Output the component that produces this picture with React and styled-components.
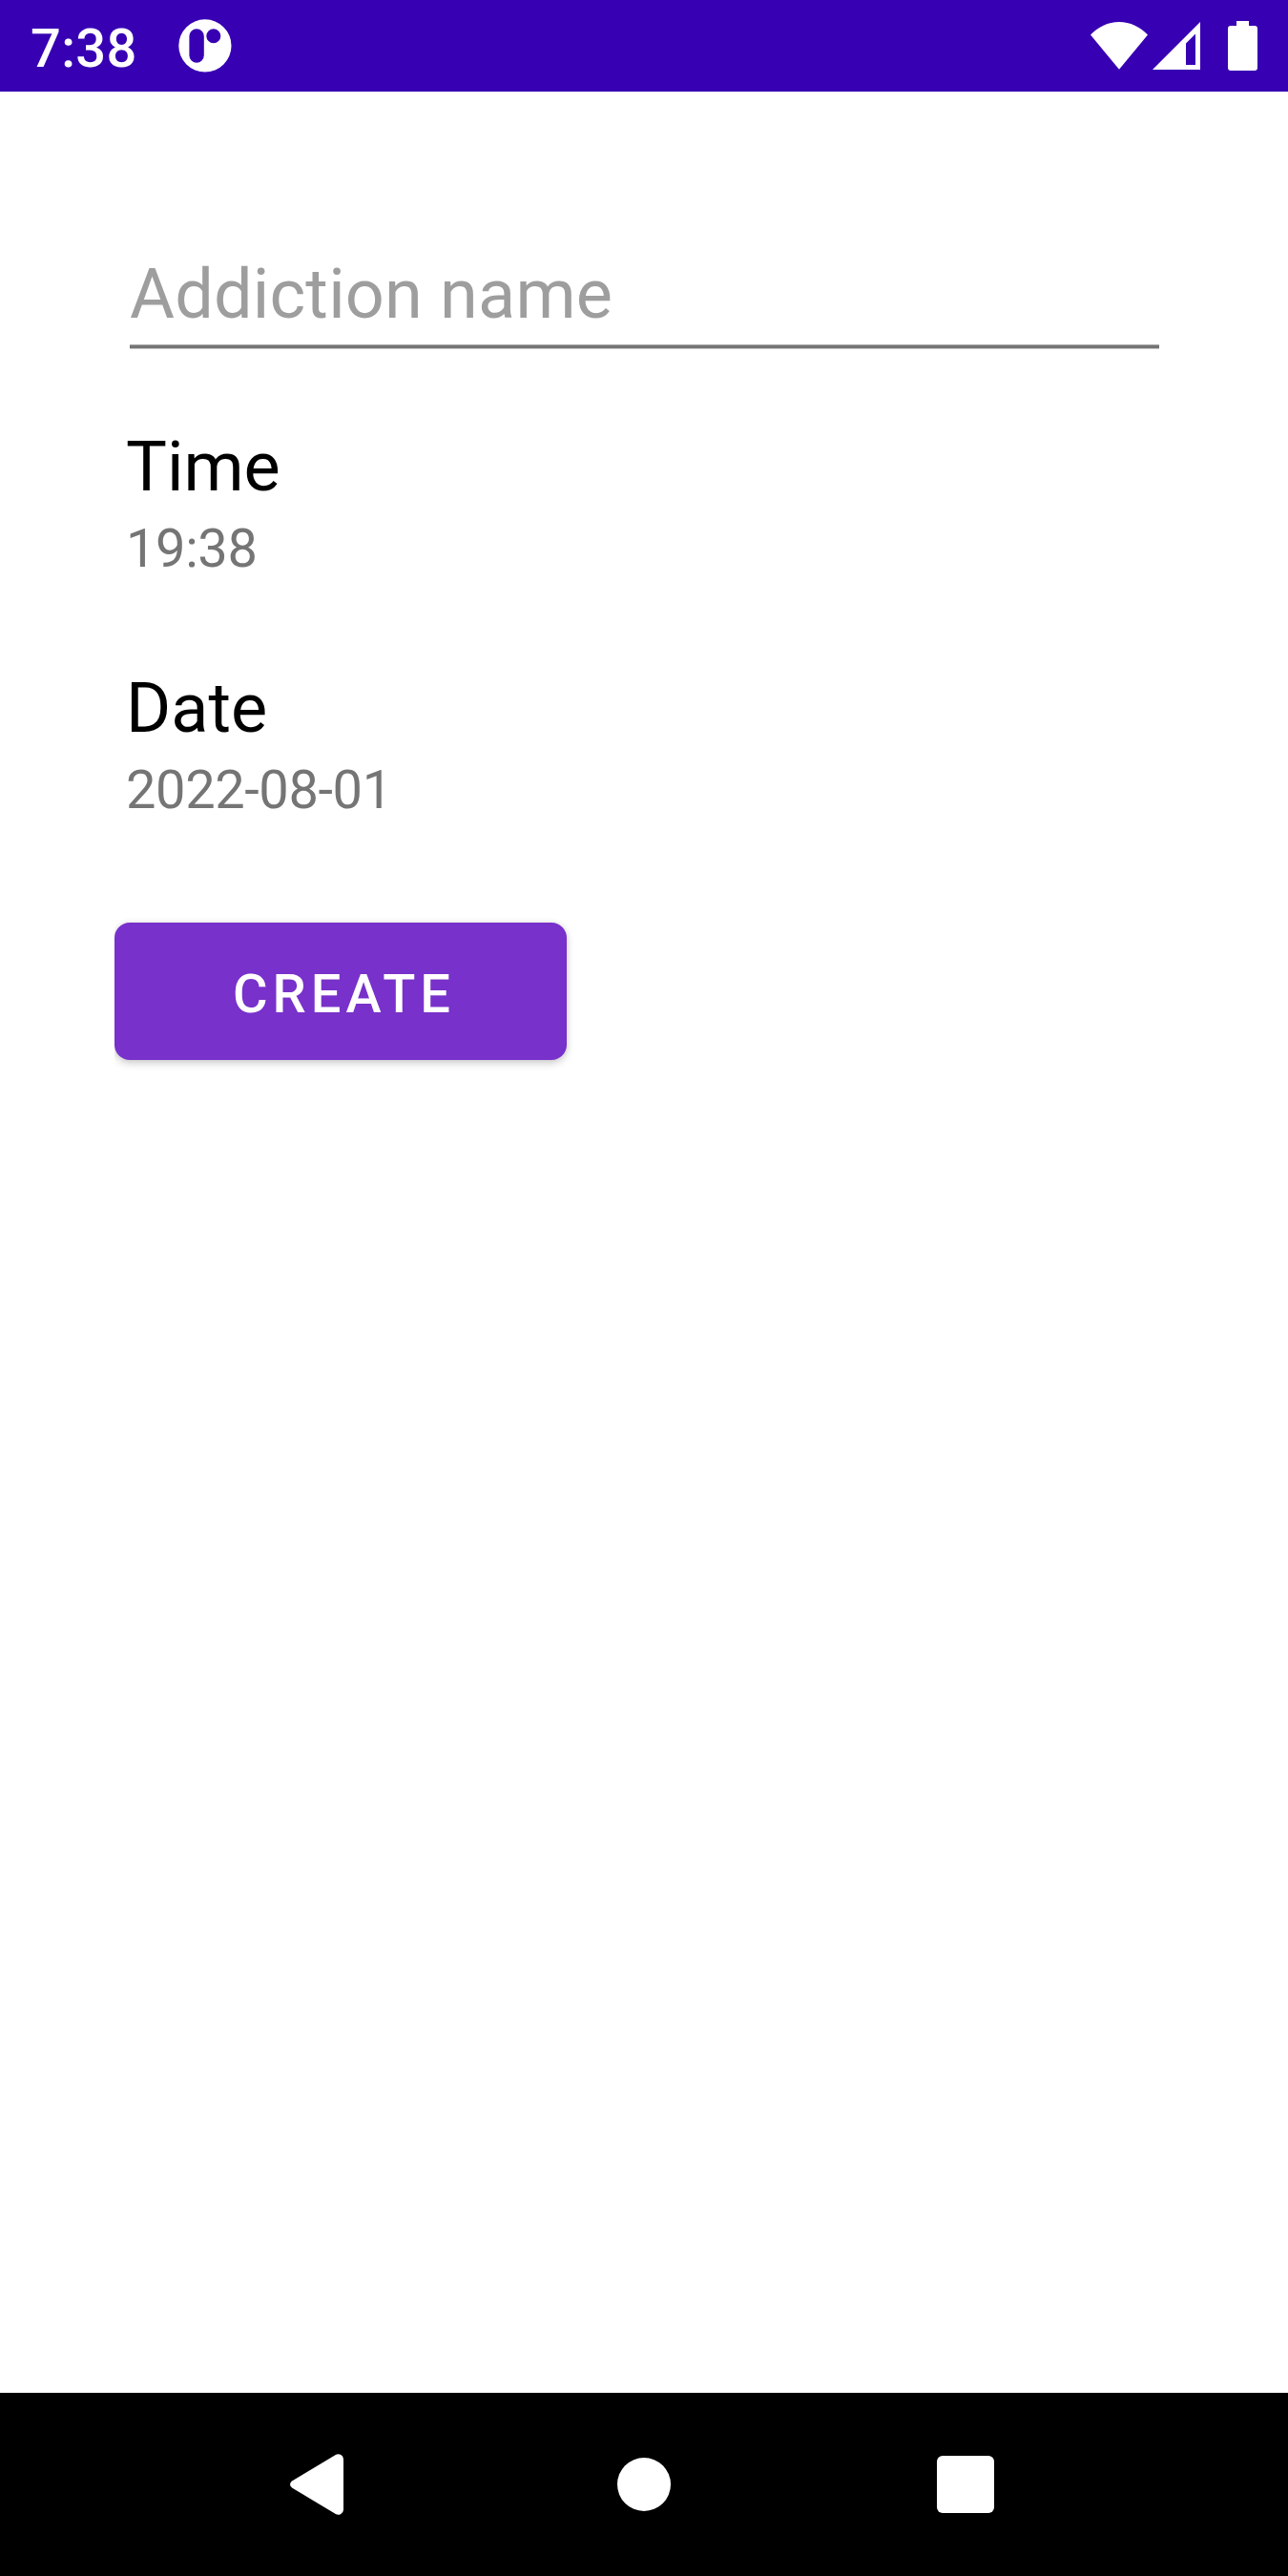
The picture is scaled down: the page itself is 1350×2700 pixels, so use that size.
import React from "react";
import styled, { createGlobalStyle } from "styled-components";

const GlobalStyle = createGlobalStyle`
  html, body { margin: 0; padding: 0; background: #fff; }
  *, *::before, *::after { box-sizing: border-box; }
`;

const Screen = styled.div`
  display: flex;
  flex-direction: column;
  width: 1350px;
  height: 2700px;
  overflow: hidden;
  background: #ffffff;
  font-family: Roboto, "Liberation Sans", sans-serif;
`;

const StatusBar = styled.header`
  display: flex;
  align-items: center;
  flex: none;
  height: 96px;
  padding-left: 32px;
  background: #3700b3;
  color: #ffffff;
`;

const Clock = styled.time`
  width: 155px;
  padding-top: 6px;
  font-size: 56px;
  font-weight: 500;
  line-height: 66px;
  letter-spacing: 0.35px;
`;

const StatusIcon = styled.svg`
  display: block;
  flex: none;
  width: ${(p) => p.$width}px;
  height: 96px;
  margin-left: ${(p) => p.$gap || 0}px;
  fill: currentColor;
`;

const StatusSpacer = styled.div`
  flex: 1;
`;

const SystemIcons = styled.div`
  display: flex;
  margin-right: 32px;
`;

const Form = styled.main`
  display: flex;
  flex-direction: column;
  flex: 1;
  margin-left: 120px;
  padding-top: 169px;
  overflow: hidden;
`;

const NameInput = styled.input`
  display: block;
  width: 1079px;
  height: 97px;
  margin: 0 0 0 16px;
  padding: 0 0 10px;
  border: 0;
  outline: 0;
  background: transparent;
  color: #000000;
  font: 400 72px/85px Roboto, "Liberation Sans", sans-serif;
  letter-spacing: 0.2px;

  &::placeholder {
    color: #9e9e9e;
    opacity: 1;
  }
`;

const Underline = styled.div`
  width: 1079px;
  height: 5px;
  margin: -1px 0 0 16px;
  border-top: 1px solid #a6a6a6;
  border-bottom: 1px solid #c8c8c8;
  background: #757575;
`;

const Field = styled.section`
  display: flex;
  flex-direction: column;
  gap: 10px;
  margin: ${(p) => p.$top}px 0 0 12px;
`;

const FieldLabel = styled.span`
  color: #000000;
  font-size: 72px;
  line-height: 85px;
`;

const FieldValue = styled.span`
  color: #757575;
  font-size: 56px;
  line-height: 66px;
  letter-spacing: -0.4px;
`;

const CreateButton = styled.button`
  flex: none;
  width: 474px;
  height: 144px;
  margin: 106px 0 0;
  padding: 6px 0 0 7px;
  border: 0;
  border-radius: 16px;
  background: #7831ca;
  box-shadow: 0 4px 8px rgba(0, 0, 0, 0.16), 0 0 6px rgba(0, 0, 0, 0.1);
  color: #ffffff;
  font: 500 56px/66px Roboto, "Liberation Sans", sans-serif;
  letter-spacing: 5px;
  text-align: center;
`;

const NavBar = styled.nav`
  display: flex;
  align-items: center;
  flex: none;
  height: 192px;
  padding-left: 304px;
  background: #000000;
`;

const BackIcon = styled.svg`
  display: block;
  width: 56px;
  height: 64px;
  fill: #ffffff;
`;

const HomeShape = styled.div`
  width: 56px;
  height: 56px;
  margin-left: 287px;
  border-radius: 50%;
  background: #ffffff;
`;

const RecentsShape = styled.div`
  width: 60px;
  height: 60px;
  margin-left: 279px;
  border-radius: 6px;
  background: #ffffff;
`;

const fields = [
  { label: "Time", value: "19:38", top: 81 },
  { label: "Date", value: "2022-08-01", top: 92 },
];

export default function App() {
  return (
    <Screen>
      <GlobalStyle />
      <StatusBar>
        <Clock>7:38</Clock>
        <StatusIcon $width={56} viewBox="187 0 56 96">
          <path
            fillRule="evenodd"
            d="M214.9 20.3a27.6 27.6 0 1 1 0 55.2a27.6 27.6 0 1 1 0-55.2z
               M206.1 30.2a7.7 7.7 0 0 0-7.7 7.7v20.2a7.7 7.7 0 0 0 15.4 0V37.9a7.7 7.7 0 0 0-7.7-7.7z
               M223.8 30.2a7.5 7.5 0 1 0 0 15a7.5 7.5 0 1 0 0-15z"
          />
        </StatusIcon>
        <StatusSpacer />
        <SystemIcons>
          <StatusIcon $width={60} viewBox="1143 0 60 96">
            <path d="M1173 72.7L1143 36.6A40.1 40.1 0 0 1 1203 36.6z" />
          </StatusIcon>
          <StatusIcon $width={50} $gap={5} viewBox="1208 0 50 96">
            <path fillRule="evenodd" d="M1208 73L1258 23V73zM1243 68H1253V35.5L1243 45.5z" />
          </StatusIcon>
          <StatusIcon $width={31} $gap={29} viewBox="1287 0 31 96">
            <path d="M1296 22H1309V27H1315a3 3 0 0 1 3 3V71a3 3 0 0 1-3 3H1290a3 3 0 0 1-3-3V30a3 3 0 0 1 3-3H1296z" />
          </StatusIcon>
        </SystemIcons>
      </StatusBar>
      <Form>
        <NameInput placeholder="Addiction name" aria-label="Addiction name" />
        <Underline />
        {fields.map((f) => (
          <Field key={f.label} $top={f.top}>
            <FieldLabel>{f.label}</FieldLabel>
            <FieldValue>{f.value}</FieldValue>
          </Field>
        ))}
        <CreateButton type="button">CREATE</CreateButton>
      </Form>
      <NavBar>
        <BackIcon viewBox="0 0 56 64">
          <path d="M48.2 .7Q50.5-.2 53 .8Q56 2.4 56 5.4V58.6Q56 61.6 53 63.2Q50.5 64.2 48.2 63.3L2.4 35.7Q0 34 0 32T2.4 28.3z" />
        </BackIcon>
        <HomeShape />
        <RecentsShape />
      </NavBar>
    </Screen>
  );
}
